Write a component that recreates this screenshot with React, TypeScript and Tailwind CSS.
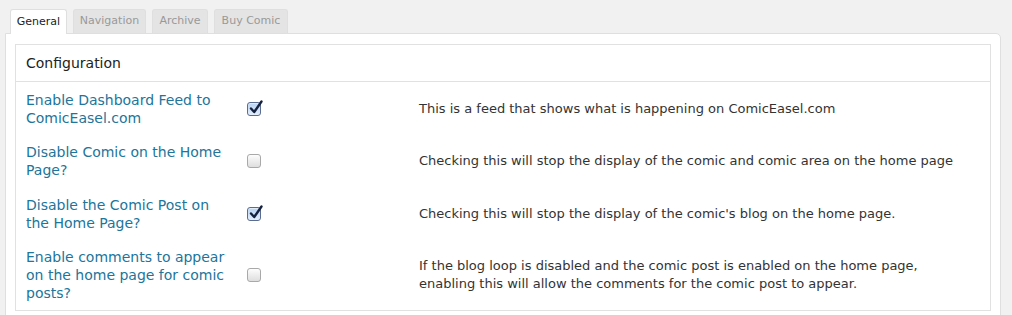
import React from 'react';

type Option = {
  label: string;
  checked: boolean;
  description: React.ReactNode;
};

const tabs = [
  { name: 'General', w: 'w-[57px]' },
  { name: 'Navigation', w: 'w-[73px]' },
  { name: 'Archive', w: 'w-[56px]' },
  { name: 'Buy Comic', w: 'w-[74px]' },
];

const options: Option[] = [
  {
    label: 'Enable Dashboard Feed to ComicEasel.com',
    checked: true,
    description: 'This is a feed that shows what is happening on ComicEasel.com',
  },
  {
    label: 'Disable Comic on the Home Page?',
    checked: false,
    description: 'Checking this will stop the display of the comic and comic area on the home page',
  },
  {
    label: 'Disable the Comic Post on the Home Page?',
    checked: true,
    description: "Checking this will stop the display of the comic's blog on the home page.",
  },
  {
    label: 'Enable comments to appear on the home page for comic posts?',
    checked: false,
    description: (
      <>
        If the blog loop is disabled and the comic post is enabled on the home page,
        <br />
        enabling this will allow the comments for the comic post to appear.
      </>
    ),
  },
];

const CheckBox: React.FC<{ checked: boolean }> = ({ checked }) => {
  if (checked) {
    return (
      <span className="relative block w-[14px] h-[14px] rounded-[3px] border border-[#5b6c93] bg-gradient-to-b from-[#b7d2f2] to-[#e4effc] shadow-[inset_0_1px_1px_rgba(255,255,255,0.6)]">
        <svg className="absolute -top-[4px] left-[1px]" width="14" height="16" viewBox="0 0 14 16">
          <path d="M2 9.5 L5.2 13 L12.5 2.5" fill="none" stroke="#15223f" strokeWidth="2.4" strokeLinecap="round" strokeLinejoin="round" />
        </svg>
      </span>
    );
  }
  return (
    <span className="block w-[14px] h-[14px] rounded-[3px] border border-[#a9a9a9] bg-gradient-to-b from-[#fdfdfd] to-[#dedede]" />
  );
};

export default function App() {
  return (
    <div className="min-h-[315px] bg-[#f1f1f1] pt-[9px] pl-[5px] pr-[11px] font-['DejaVu_Sans',Verdana,sans-serif]">
      <div className="relative z-10 flex gap-[6px] pl-[5px]">
        {tabs.map((t, i) => (
          <div
            key={t.name}
            className={
              i === 0
                ? `${t.w} h-[25px] flex items-center justify-center rounded-t-[3px] border border-b-0 border-[#dfdfdf] bg-white text-[11px] text-[#222]`
                : `${t.w} h-[24px] flex items-center justify-center rounded-t-[3px] border border-b-0 border-[#dfdfdf] bg-[#e4e4e4] text-[11px] text-[#999]`
            }
          >
            {t.name}
          </div>
        ))}
      </div>
      <div className="-mt-px rounded-[5px] rounded-tl-none border border-[#dfdfdf] bg-white pt-[10px] px-[9px] pb-[20px]">
        <div className="border border-[#e1e1e1]">
          <div className="h-[37px] flex items-center pl-[10px] border-b border-[#e1e1e1] text-[14px] text-[#222]">
            Configuration
          </div>
          <div className="pt-[1px]">
            {options.map((o) => (
              <div key={o.label} className="flex items-center py-[8px] pl-[10px] min-h-[52.3px]">
                <div className="w-[210px] pr-[8px] text-[14px] leading-[18px] text-[#21759b]">{o.label}</div>
                <div className="w-[183px] pl-[11px]">
                  <CheckBox checked={o.checked} />
                </div>
                <div className="text-[13px] leading-[18px] text-[#333]">{o.description}</div>
              </div>
            ))}
          </div>
        </div>
      </div>
    </div>
  );
}
